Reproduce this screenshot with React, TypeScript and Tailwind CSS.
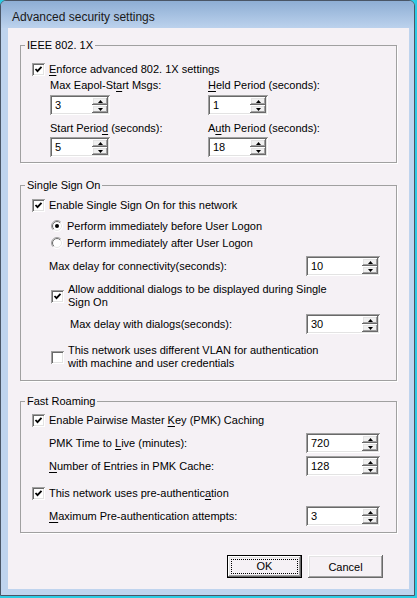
import React from 'react';

const sunken =
  'shadow-[inset_1px_1px_0_#a0a0a0,inset_-1px_-1px_0_#ffffff,inset_2px_2px_0_#696969,inset_-2px_-2px_0_#e3e3e3]';
const raised =
  'shadow-[inset_-1px_-1px_0_#696969,inset_1px_1px_0_#ffffff,inset_-2px_-2px_0_#a0a0a0,inset_2px_2px_0_#e3e3e3]';

const Check: React.FC<{ checked?: boolean }> = ({ checked }) => (
  <span className={`w-[13px] h-[13px] shrink-0 bg-white flex items-center justify-center ${sunken}`}>
    {checked && (
      <svg width="13" height="13" viewBox="0 0 13 13">
        <path d="M3.5 6 L5.5 8.2 L9.5 3.8" fill="none" stroke="#000" strokeWidth="1.8" />
      </svg>
    )}
  </span>
);

const Radio: React.FC<{ checked?: boolean }> = ({ checked }) => (
  <svg width="12" height="12" viewBox="0 0 12 12" className="shrink-0">
    <defs>
      <linearGradient id="ro" x1="0" y1="0" x2="1" y2="1">
        <stop offset="0.45" stopColor="#a0a0a0" />
        <stop offset="0.55" stopColor="#ffffff" />
      </linearGradient>
      <linearGradient id="ri" x1="0" y1="0" x2="1" y2="1">
        <stop offset="0.45" stopColor="#696969" />
        <stop offset="0.55" stopColor="#e3e3e3" />
      </linearGradient>
    </defs>
    <circle cx="6" cy="6" r="5.5" fill="#fff" stroke="url(#ro)" strokeWidth="1" />
    <circle cx="6" cy="6" r="4.5" fill="#fff" stroke="url(#ri)" strokeWidth="1" />
    {checked && <circle cx="6" cy="6" r="2" fill="#000" />}
  </svg>
);

const Spin: React.FC<{ value: string; wide?: boolean }> = ({ value, wide }) => (
  <div className={`${wide ? 'w-[74px]' : 'w-[60px]'} h-[20px] shrink-0 bg-white flex p-[2px] ${sunken}`}>
    <span className="flex-1 pl-[3px] leading-[16px]">{value}</span>
    <div className="w-[16px] flex flex-col">
      <div className={`h-[8px] bg-[#f0f0f0] flex items-center justify-center ${raised}`}>
        <svg width="5" height="3" viewBox="0 0 5 3">
          <path d="M2.5 0 L5 3 L0 3 Z" fill="#000" />
        </svg>
      </div>
      <div className={`h-[8px] bg-[#f0f0f0] flex items-center justify-center ${raised}`}>
        <svg width="5" height="3" viewBox="0 0 5 3">
          <path d="M0 0 L5 0 L2.5 3 Z" fill="#000" />
        </svg>
      </div>
    </div>
  </div>
);

const Group: React.FC<{ title: string; className?: string; children: React.ReactNode }> = ({
  title,
  className,
  children,
}) => (
  <fieldset className={`mx-[12px] border border-[#a0a0a0] shadow-[1px_1px_0_#ffffff] ${className ?? ''}`}>
    <legend className="ml-[4px] px-[2px] leading-[14px]">{title}</legend>
    {children}
  </fieldset>
);

const U: React.FC<{ children: React.ReactNode }> = ({ children }) => (
  <span className="underline underline-offset-[2px]">{children}</span>
);

const LabeledSpin: React.FC<{ label: React.ReactNode; value: string; className?: string }> = ({
  label,
  value,
  className,
}) => (
  <div className={`h-[20px] flex items-center justify-between pr-[16px] ${className ?? ''}`}>
    <span>{label}</span>
    <Spin value={value} wide />
  </div>
);

export default function App() {
  return (
    <div className="w-[417px] h-[598px] bg-[#2ccbe4] font-['Liberation_Sans',Arial,sans-serif] text-[11px] leading-[14px] text-black">
      <div className="w-[415px] h-[596px] rounded-t-[6px] border border-[#4a5666] bg-[#bfd4ee] flex flex-col">
        <div className="h-[27px] rounded-t-[5px] bg-gradient-to-b from-[#8eaed4] to-[#bcd2ed] pl-[11px] pt-[8px] text-[12px] leading-[16px] text-[#1a1a1a]">
          Advanced security settings
        </div>
        <div className="ml-[7px] w-[401px] h-[561px] bg-[#f5f1f5] flex flex-col">
          <Group title="IEEE 802. 1X" className="mt-[10px] pb-[5px]">
            <div className="mt-[9px] h-[16px] pl-[11px] flex items-center gap-[4px]">
              <Check checked />
              <span>
                <U>E</U>nforce advanced 802. 1X settings
              </span>
            </div>
            <div className="pl-[29px] grid grid-cols-[158px_1fr] gap-y-[6px] mt-[1px]">
              <div className="flex flex-col gap-[3px]">
                <span>
                  Max Eapol-St<U>a</U>rt Msgs:
                </span>
                <Spin value="3" />
              </div>
              <div className="flex flex-col gap-[3px]">
                <span>
                  <U>H</U>eld Period (seconds):
                </span>
                <Spin value="1" />
              </div>
              <div className="flex flex-col gap-[2px]">
                <span>
                  Start Perio<U>d</U> (seconds):
                </span>
                <Spin value="5" />
              </div>
              <div className="flex flex-col gap-[2px]">
                <span>
                  A<U>u</U>th Period (seconds):
                </span>
                <Spin value="18" />
              </div>
            </div>
          </Group>

          <Group title="Single Sign On" className="mt-[15px] pb-[10px]">
            <div className="mt-[5px] h-[16px] pl-[11px] flex items-center gap-[4px]">
              <Check checked />
              <span>Enable Single Sign On for this network</span>
            </div>
            <div className="mt-[5px] h-[16px] pl-[30px] flex items-center gap-[4px]">
              <Radio checked />
              <span>Perform immediately before User Logon</span>
            </div>
            <div className="mt-[1px] h-[16px] pl-[30px] flex items-center gap-[4px]">
              <Radio />
              <span>Perform immediately after User Logon</span>
            </div>
            <LabeledSpin className="mt-[5px] pl-[28px]" label="Max delay for connectivity(seconds):" value="10" />
            <div className="mt-[7px] pl-[30px] flex items-center gap-[4px] leading-[13px]">
              <Check checked />
              <span>
                Allow additional dialogs to be displayed during Single
                <br />
                Sign On
              </span>
            </div>
            <LabeledSpin className="mt-[5px] pl-[49px]" label="Max delay with dialogs(seconds):" value="30" />
            <div className="mt-[10px] pl-[30px] flex items-center gap-[4px] leading-[13px]">
              <Check />
              <span>
                This network uses different VLAN for authentication
                <br />
                with machine and user credentials
              </span>
            </div>
          </Group>

          <Group title="Fast Roaming" className="mt-[13px] pb-[6px]">
            <div className="mt-[4px] h-[16px] pl-[11px] flex items-center gap-[4px]">
              <Check checked />
              <span>
                Enable Pairwise Master <U>K</U>ey (PMK) Caching
              </span>
            </div>
            <LabeledSpin
              className="mt-[5px] pl-[28px]"
              label={
                <>
                  PMK Time to <U>L</U>ive (minutes):
                </>
              }
              value="720"
            />
            <LabeledSpin
              className="mt-[3px] pl-[28px]"
              label={
                <>
                  <U>N</U>umber of Entries in PMK Cache:
                </>
              }
              value="128"
            />
            <div className="mt-[9px] h-[16px] pl-[11px] flex items-center gap-[4px]">
              <Check checked />
              <span>
                This network uses pre-authentic<U>a</U>tion
              </span>
            </div>
            <LabeledSpin
              className="mt-[5px] pl-[28px]"
              label={
                <>
                  <U>M</U>aximum Pre-authentication attempts:
                </>
              }
              value="3"
            />
          </Group>

          <div className="mt-[22px] pr-[26px] flex justify-end gap-[6px]">
            <button className="w-[75px] h-[23px] border border-black p-[3px] bg-[#f5f1f5] shadow-[inset_-1px_-1px_0_#696969,inset_1px_1px_0_#ffffff,inset_-2px_-2px_0_#a0a0a0,inset_2px_2px_0_#e3e3e3] flex">
              <span className="flex-1 border border-dotted border-black flex items-center justify-center leading-[13px]">
                OK
              </span>
            </button>
            <button className="w-[75px] h-[23px] bg-[#f5f1f5] shadow-[inset_-1px_-1px_0_#696969,inset_1px_1px_0_#ffffff,inset_-2px_-2px_0_#a0a0a0,inset_2px_2px_0_#e3e3e3] flex items-center justify-center">
              Cancel
            </button>
          </div>
        </div>
      </div>
    </div>
  );
}
